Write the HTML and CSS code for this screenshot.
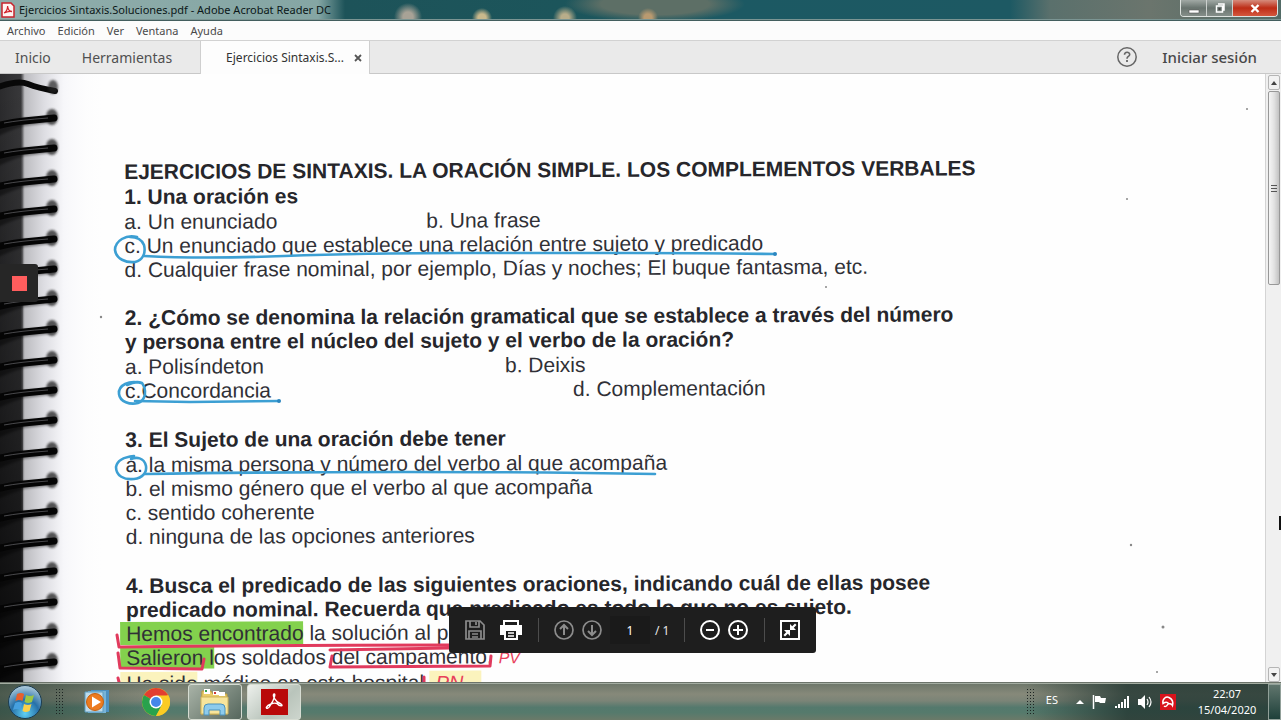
FILE: index.html
```html
<!DOCTYPE html>
<html lang="es">
<head>
<meta charset="utf-8">
<title>Ejercicios Sintaxis.Soluciones.pdf - Adobe Acrobat Reader DC</title>
<link rel="stylesheet" href="styles.css">
</head>
<body>
<header class="titlebar">
  <svg class="app-icon" width="14" height="16" viewBox="0 0 14 16"><path d="M1 1h9l3 3v11H1z" fill="#fff4f2" stroke="#c8232c" stroke-width="1.5"/><path d="M3 11c2-1 4-4 3.500-7C7 8 9 9.500 11 9.500 8 9 5 10 3 11z" fill="none" stroke="#d1222b" stroke-width="1.300"/></svg>
  <h1 class="window-title">Ejercicios Sintaxis.Soluciones.pdf - Adobe Acrobat Reader DC</h1>
  <div class="window-controls">
    <button class="wc" aria-label="Minimizar"><svg width="12" height="12"><path d="M1 8h10v3H1z" fill="#fff" stroke="#555" stroke-width=".6"/></svg></button>
    <button class="wc" aria-label="Restaurar"><svg width="12" height="12"><path d="M4 2h6v6H9M2.500 4h6v6h-6z" fill="none" stroke="#fff" stroke-width="1.500"/><path d="M4.500 6h2v2h-2z" fill="#444"/></svg></button>
    <button class="wc wc-close" aria-label="Cerrar"><svg width="12" height="12"><path d="M2.500 3l7 7M9.500 3l-7 7" stroke="#fff" stroke-width="2.400"/></svg></button>
  </div>
</header>
<nav class="menubar">
  <button>Archivo</button><button>Edición</button><button>Ver</button><button>Ventana</button><button>Ayuda</button>
</nav>
<nav class="tabs">
  <button class="tab">Inicio</button>
  <button class="tab">Herramientas</button>
  <div class="tab-active"><span>Ejercicios Sintaxis.S...</span><button class="tab-close" aria-label="Cerrar pestaña"><svg width="8" height="8"><path d="M1 1l6 6M7 1L1 7" stroke="#555" stroke-width="1.800"/></svg></button></div>
  <div class="account">
    <button aria-label="Ayuda"><svg width="22" height="22" viewBox="0 0 22 22" fill="none" stroke="#666"><circle cx="11" cy="11" r="9.200" stroke-width="1.500"/><path d="M8.500 8.800c0-3.300 5.200-3.300 5.200-.3 0 2-2.700 2-2.700 4.200" stroke-width="1.600"/><path d="M11 14v2" stroke-width="1.800"/></svg></button>
    <button class="signin">Iniciar sesión</button>
  </div>
</nav>

<main class="viewer">
  <svg class="binding" width="110" height="610" aria-hidden="true">
    <defs>
      <linearGradient id="edge"><stop offset="0" stop-color="#2c2c2e"/><stop offset=".19" stop-color="#39393b"/><stop offset=".225" stop-color="#bcbcc0"/><stop offset=".4" stop-color="#dddde2"/><stop offset=".58" stop-color="#f7f7fa"/><stop offset="1" stop-color="#fff" stop-opacity="0"/></linearGradient>
      <linearGradient id="dark" x2="0" y2="1"><stop offset="0" stop-color="#000" stop-opacity="0"/><stop offset=".5" stop-color="#000" stop-opacity=".35"/><stop offset="1" stop-color="#000" stop-opacity=".8"/></linearGradient>
      <filter id="soft" x="-20%" y="-50%" width="140%" height="200%"><feGaussianBlur stdDeviation="1.100"/></filter>
      <g id="ring">
        <path d="M-4 12Q8 3 24 1l27-2v7L24 9Q8 14-4 20z" fill="#000" opacity=".4" filter="url(#soft)"/>
        <ellipse cx="52" cy="0" rx="6" ry="8" fill="#222" opacity=".75" filter="url(#soft)"/>
        <path d="M-3 9Q12 5 24 4l30-3" fill="none" stroke="#050505" stroke-width="7" stroke-linecap="round"/>
        <path d="M4 6Q20 3 48 1" fill="none" stroke="#77777c" stroke-width="1" opacity=".6"/>
      </g>
    </defs>
    <rect width="110" height="610" fill="url(#edge)"/>
    <rect width="23" height="610" fill="url(#dark)"/>
    <path d="M-2 13Q18 6 28 10t27 7" fill="none" stroke="#080808" stroke-width="6" stroke-linecap="round"/>
    <ellipse cx="53" cy="13" rx="5" ry="7" fill="#222" opacity=".7" filter="url(#soft)"/>
    <use href="#ring" y="43"/><use href="#ring" y="73"/><use href="#ring" y="104"/><use href="#ring" y="134"/><use href="#ring" y="164"/><use href="#ring" y="194"/><use href="#ring" y="224"/><use href="#ring" y="254"/><use href="#ring" y="285"/><use href="#ring" y="315"/><use href="#ring" y="345"/><use href="#ring" y="376"/><use href="#ring" y="406"/><use href="#ring" y="436"/><use href="#ring" y="466"/><use href="#ring" y="496"/><use href="#ring" y="527"/><use href="#ring" y="557"/><use href="#ring" y="587"/>
  </svg>

  <article class="sheet">
    <section>
      <h2>EJERCICIOS DE SINTAXIS. LA ORACIÓN SIMPLE. LOS COMPLEMENTOS VERBALES</h2>
      <h3>1. Una oración es</h3>
      <div class="options cols-near"><p>a. Un enunciado</p><p>b. Una frase</p></div>
      <p>c. Un enunciado que establece una relación entre sujeto y predicado</p>
      <p>d. Cualquier frase nominal, por ejemplo, Días y noches; El buque fantasma, etc.</p>
    </section>
    <section>
      <h3>2. ¿Cómo se denomina la relación gramatical que se establece a través del número<br>y persona entre el núcleo del sujeto y el verbo de la oración?</h3>
      <div class="options cols-mid"><p>a. Polisíndeton</p><p>b. Deixis</p></div>
      <div class="options cols-far"><p>c.Concordancia</p><p>d. Complementación</p></div>
    </section>
    <section>
      <h3>3. El Sujeto de una oración debe tener</h3>
      <p>a. la misma persona y número del verbo al que acompaña</p>
      <p>b. el mismo género que el verbo al que acompaña</p>
      <p>c. sentido coherente</p>
      <p>d. ninguna de las opciones anteriores</p>
    </section>
    <section>
      <h3>4. Busca el predicado de las siguientes oraciones, indicando cuál de ellas posee<br>predicado nominal. Recuerda que predicado es todo lo que no es sujeto.</h3>
      <p><mark>Hemos encontrado</mark> la solución al problema.</p>
      <p><mark>Salieron l</mark>os soldados del campamento. <i class="note">PV</i></p>
      <p><mark class="pale">Ha sido</mark> médico en este hospital. <mark class="pale answer"><i class="note note-big">PN</i></mark></p>
    </section>
  </article>

  <svg class="ink" width="100%" height="100%" aria-hidden="true">
    <g transform="translate(0 -74)" fill="none" stroke-linecap="round" stroke-linejoin="round">
      <g stroke="#3c9fd3" stroke-width="2.600">
        <path d="M137 237c-11-3-22 4-22 13 1 9 11 13 20 12 8-2 11-9 9-17-2-5-6-8-14-8"/>
        <path d="M144 256q60 3 140 0t175-3 170 0 146 1"/>
        <path d="M141 383c-12-3-23 2-22 11 1 8 11 11 19 9 8-3 9-13 4-20-5-2-11 0-15 2"/>
        <path d="M135 401l55 1 89-1"/>
        <path d="M134 456c-10 1-17 5-18 11 0 9 8 13 18 12 9-1 13-7 12-13-2-9-10-9-15-7"/>
        <path d="M145 474q120-2 260-2t250 2"/>
      </g>
      <g stroke="#e13a5d" stroke-width="3">
        <path d="M117 635l2 12q160-2 330-2M330 650l120-2"/>
        <path d="M118 653l2 15 82 1 2-10M332 656l-2 11 160-1 1-10M118 678l2 8M424 677v9"/>
      </g>
      <g fill="#888" stroke="none"><circle cx="101" cy="317" r="1.200"/><circle cx="775" cy="254" r="2" fill="#2b86c0"/><circle cx="279" cy="401" r="2" fill="#2b86c0"/><circle cx="1247" cy="109" r="1"/><circle cx="1131" cy="545" r="1.200"/><circle cx="826" cy="287" r="1"/><circle cx="1163" cy="627" r="1.500"/><circle cx="1157" cy="672" r="1"/><circle cx="1127" cy="199" r="1"/></g>
    </g>
  </svg>

  <button class="record" aria-label="Detener grabación"><span></span></button>

  <div class="floatbar">
    <button aria-label="Guardar"><svg width="20" height="20" fill="none" stroke="#8c8c8c" stroke-width="1.700"><path d="M1 1h14l4 4v14H1z"/><path d="M5 1v6h9V1M11 2v3M4 19v-8h12v8M7 14h6M7 17h6"/></svg></button>
    <button aria-label="Imprimir"><svg width="22" height="20"><path d="M4 6V1h14v5M4 14H1V6h20v8h-3" fill="none" stroke="#fff" stroke-width="2"/><path d="M1 7h20v6H1z" fill="#fff"/><path d="M5 10h12v9H5z" fill="#1e1e1e" stroke="#fff" stroke-width="2"/><path d="M8 13h6M8 16h6" stroke="#fff" stroke-width="1.400"/></svg></button>
    <hr>
    <button aria-label="Página anterior"><svg width="20" height="20" fill="none" stroke="#8c8c8c" stroke-width="1.700"><circle cx="10" cy="10" r="9"/><path d="M10 15V5M6 9l4-4 4 4" stroke-width="2"/></svg></button>
    <button aria-label="Página siguiente"><svg width="20" height="20" fill="none" stroke="#8c8c8c" stroke-width="1.700"><circle cx="10" cy="10" r="9"/><path d="M10 5v10M6 11l4 4 4-4" stroke-width="2"/></svg></button>
    <input class="page-no" aria-label="Página" value="1"><span class="page-total">/ 1</span>
    <hr>
    <button aria-label="Alejar"><svg width="20" height="20" fill="none" stroke="#fff" stroke-width="2"><circle cx="10" cy="10" r="9"/><path d="M6 10h8"/></svg></button>
    <button aria-label="Acercar"><svg width="20" height="20" fill="none" stroke="#fff" stroke-width="2"><circle cx="10" cy="10" r="9"/><path d="M5 10h10M10 5v10"/></svg></button>
    <hr>
    <button aria-label="Salir de pantalla completa"><svg width="20" height="20"><path d="M1 1h18v18H1z" fill="none" stroke="#fff" stroke-width="2"/><path d="M10 10V4l2.200 2.200L15 3.500 16.500 5l-2.700 2.800L16 10zM10 10v6l-2.200-2.200L5 16.500 3.500 15l2.700-2.800L4 10z" fill="#fff"/></svg></button>
  </div>

  <div class="scrollbar" aria-hidden="true">
    <span class="sb-btn"><svg width="6" height="4"><path d="M0 4l3-4 3 4z" fill="#444"/></svg></span>
    <span class="sb-thumb"><i></i><i></i><i></i></span>
    <span class="sb-space"></span>
    <span class="sb-btn"><svg width="6" height="4"><path d="M0 0l3 4 3-4z" fill="#444"/></svg></span>
  </div>
  <span class="pointer"></span>
</main>

<footer class="taskbar">
  <button class="start" aria-label="Inicio"><svg width="36" height="36" viewBox="0 0 36 36">
    <defs><radialGradient id="orb" cx=".5" cy=".85" r=".85"><stop offset="0" stop-color="#5fd0f4"/><stop offset=".5" stop-color="#2670a8"/><stop offset="1" stop-color="#b4cedd"/></radialGradient></defs>
    <circle cx="18" cy="18" r="16.500" fill="url(#orb)" stroke="#1b3c50"/><path d="M10 10q4-2 7 0l-1.500 7q-4-2-7 0z" fill="#e8602c"/><path d="M19 11q4 2 8 0l-2 7q-4 2-7.500 0z" fill="#9cc744"/><path d="M8 19q4-2 7 0l-1.500 7q-4-2-7.500 0z" fill="#46a0df"/><path d="M17 20q4 2 7.500 0l-2 7q-4 2-7 0z" fill="#fad04a"/></svg></button>
  <span class="grip"></span>
  <button class="task" aria-label="Windows Media Player"><svg width="26" height="26"><path d="M7 1h18v22H7z" fill="#4c90c0"/><path d="M4 2h18v22H4z" fill="#78b4d8"/><path d="M1 3h18v20H1z" fill="#bfdbea" stroke="#5d9dc1"/><circle cx="11" cy="13" r="8.500" fill="#ec7b20" stroke="#c5600e"/><path d="M8 7.500l9 5.500-9 5.500z" fill="#fff"/></svg></button>
  <button class="task" aria-label="Google Chrome"><svg width="28" height="28" viewBox="0 0 28 28"><circle cx="14" cy="14" r="14" fill="#f9c71c"/><path d="M14 14L1.900 7A14 14 0 0 1 26.100 7z" fill="#e23e31"/><path d="M14 14L1.900 7A14 14 0 0 0 14 28l6-10.500z" fill="#29a24d"/><path d="M14 7.500H26.400A14 14 0 0 1 14 28l5.600-10.700z" fill="#fbcb24"/><circle cx="14" cy="14" r="6.500" fill="#fff"/><circle cx="14" cy="14" r="5" fill="#4587ea"/></svg></button>
  <button class="task open" aria-label="Explorador de archivos"><svg width="32" height="28"><path d="M3 3h9l2 3h14v20H2z" fill="#eacb69" stroke="#b99b42"/><path d="M5 1h6v5H5zM14 3h6v4h-6zM20 4h6v4h-6z" fill="#fff"/><path d="M6 2h2v2H6z" fill="#33a14c"/><path d="M15 4h2v2h-2z" fill="#d03933"/><path d="M2 9h27v17H2z" fill="#f7e59c" stroke="#cdb35b"/><path d="M5 27v-7q0-4 4-4h13q4 0 4 4v7h-5v-5H10v5z" fill="#8dcbec" stroke="#4a92bd"/></svg></button>
  <button class="task open active" aria-label="Adobe Acrobat Reader DC"><svg width="27" height="26"><path d="M0 0h27v26H0z" fill="#b90909"/><path d="M7 19c-3 1-2-2 3-4 3-4 5-11 3-10s1 8 7 10c3 2-1 3-4-.5-3-1-5 0-6 .5-1 2-2 4-3 4z" fill="none" stroke="#fff" stroke-width="1.400"/></svg></button>
  <div class="tray">
    <span class="grip"></span>
    <span class="lang">ES</span>
    <svg width="8" height="5"><path d="M0 5l4-4 4 4z" fill="#fff"/></svg>
    <svg width="15" height="14"><path d="M1.500 0v14" stroke="#fff" stroke-width="1.500"/><path d="M3 1h5l1 2h5l-1 5H8L7 7H3z" fill="#fff"/></svg>
    <svg width="15" height="12" fill="#fff"><path d="M0 10h2v2H0zM3 8h2v4H3zM6 6h2v6H6zM9 3h2v9H9zM12 0h2v12h-2z"/></svg>
    <svg width="14" height="14"><path d="M0 4h3l4-4v14l-4-4H0z" fill="#fff"/><path d="M9 4q2 3 0 6M11 2q4 5 0 10" fill="none" stroke="#fff" stroke-width="1.200"/></svg>
    <svg width="16" height="16"><path d="M0 0h16v16H0z" fill="#d8131c"/><path d="M3 9.500C2 5 6 2 9 3.500c3 1.500 4.500 4 3.500 8-1-2-2.500-2-4-2-1-1.500-3-1.500-5.500 0z" fill="none" stroke="#fff" stroke-width="1.500"/><path d="M8.500 9.500l-2 2.500q-1.500 1-2.500 0" fill="none" stroke="#fff" stroke-width="1.300"/></svg>
    <time class="clock"><span>22:07</span><span>15/04/2020</span></time>
    <button class="show-desktop" aria-label="Mostrar escritorio"></button>
  </div>
</footer>
</body>
</html>
```
FILE: styles.css
```css
* { box-sizing: border-box; }
body {
  margin: 0;
  height: 100vh;
  display: flex;
  flex-direction: column;
  overflow: hidden;
  font-family: "Noto Sans", sans-serif;
  background: #fff;
}
button { border: 0; padding: 0; background: none; color: inherit; font: inherit; display: flex; align-items: center; justify-content: center; }
h1, h2, h3, p { margin: 0; }

.titlebar {
  flex: none;
  height: 21px;
  display: flex;
  align-items: center;
  padding-left: 1px;
  gap: 4px;
  border-bottom: 1px solid #435e5e;
  box-shadow: inset 0 -1px #7b9593;
  background:
    radial-gradient(circle at 482px 18px, #c9b98c 0 4px, transparent 10px),
    radial-gradient(circle at 565px 18px, #b8ad8a 0 4px, transparent 12px),
    radial-gradient(circle at 648px 18px, #b99a70 0 4px, transparent 10px),
    radial-gradient(circle at 408px 17px, #a8a296 0 5px, transparent 14px),
    radial-gradient(ellipse 90px 18px at 655px 4px, #5d6f66 0 60%, transparent),
    linear-gradient(90deg, #8fadab 0, #85a6a4 318px, #1d5359 345px, #1c555b 560px, #1c5963 720px, #1d5963 1010px, #5a706c 1050px, #6b756d 1150px, #526b66 100%);
}
.window-title { font-size: 11px; font-weight: 400; line-height: 20px; color: #0b1718; white-space: nowrap; }
.window-controls { margin-left: auto; margin-right: 3px; align-self: flex-start; display: flex; height: 17px; border: 1px solid #dde2df; border-top: 0; border-radius: 0 0 4px 4px; overflow: hidden; }
.wc { width: 26px; border-right: 1px solid #cbd0cd; background: linear-gradient(#a1a9a5, #68736e 50%, #858e89); }
.wc-close { width: 44px; border: 0; background: linear-gradient(#d68b7c, #bd2c16 50%, #d4573d); }

.menubar { flex: none; height: 19px; display: flex; align-items: center; gap: 12px; padding-left: 7px; background: #fcfcfc; font-size: 11px; color: #4a4a4a; }

.tabs { flex: none; height: 34px; display: flex; align-items: stretch; background: #eaeaea; border-top: 1px solid #d2d2d2; border-bottom: 1px solid #c8c8c8; color: #505050; }
.tab { font-size: 14px; margin-left: 15px; margin-right: 16px; }
.tab-active { display: flex; align-items: center; gap: 10px; margin-left: 12px; margin-bottom: -1px; padding: 0 7px 0 25px; background: #fdfdfd; border: 1px solid #cfcfcf; border-width: 0 1px; font-size: 12px; color: #333; }
.account { margin-left: auto; margin-right: 24px; display: flex; align-items: center; gap: 24px; }
.signin { font-size: 15px; font-weight: 500; color: #484848; }

.viewer { position: relative; flex: 1; min-height: 0; display: flex; overflow: hidden; background: #fefefe; }
.binding { position: absolute; left: 0; top: 0; }
.sheet {
  flex: 1;
  position: relative;
  padding: 86px 20px 0 125px;
  font: 21px/24px "Liberation Sans", sans-serif;
  color: #303036;
  white-space: nowrap;
  transform: rotate(-0.25deg);
  transform-origin: 125px 300px;
}
.sheet section { margin-bottom: 25px; }
.sheet h2, .sheet h3 { font-size: 21px; line-height: 24px; color: #26262b; }
.sheet h2, .sheet section:not(:last-child) h3 { margin-bottom: 1px; }
.sheet section:first-child { margin-bottom: 24px; }
.options { display: grid; }
.cols-near { grid-template-columns: 302px 1fr; }
.cols-mid { grid-template-columns: 380px 1fr; }
.cols-far { grid-template-columns: 448px 1fr; }
mark { margin-left: -6px; padding-left: 6px; background: #83d14d; color: inherit; }
mark.pale { background: #fbf3bd; }
mark.answer { padding-right: 18px; }
.note { color: #e8405a; font-size: 16px; }
.note-big { font-size: 20px; }
.ink { position: absolute; inset: 0; pointer-events: none; }

.record { position: absolute; left: 0; top: 190px; width: 38px; height: 38px; background: #262626; border-radius: 0 3px 3px 0; }
.record span { width: 15px; height: 15px; background: #ff5d5d; }

.floatbar {
  position: absolute;
  left: 449px;
  bottom: 29px;
  height: 46px;
  padding: 0 16px;
  display: flex;
  align-items: center;
  background: #1e1e1e;
  border-radius: 3px;
  color: #e8e8e8;
  font-size: 12px;
}
.floatbar button { width: 20px; margin-right: 8px; }
.floatbar button:nth-of-type(2) { width: 22px; margin-left: 7px; }
.floatbar button:last-child { margin-right: 0; }
.floatbar hr { width: 1px; height: 24px; border: 0; margin: 0 15px 0 8px; background: #4c4c4c; }
.floatbar .page-total + hr { margin-left: 15px; }
.page-no { width: 40px; height: 28px; border: 0; padding: 0; background: #1a1a1a; color: #fff; font: inherit; text-align: center; }
.page-total { padding-left: 5px; }

.scrollbar { position: relative; flex: none; width: 16px; padding: 1px 1px 0 2px; display: flex; flex-direction: column; background: #f0f0f0; border-left: 1px solid #d4d4d4; }
.sb-btn { height: 15px; display: flex; align-items: center; justify-content: center; border: 1px solid #b5b5b5; background: #f2f2f2; border-radius: 2px; }
.sb-thumb { flex: 0 0 32%; margin-top: 1px; display: flex; flex-direction: column; align-items: center; justify-content: center; gap: 2px; border: 1px solid #989898; border-radius: 2px; background: linear-gradient(90deg, #f5f5f5, #e2e2e2 50%, #c2c2c2); }
.sb-thumb i { width: 6px; height: 1px; background: #555; }
.sb-space { flex: 1; }
.pointer { position: absolute; right: 0; top: 442px; width: 2px; height: 14px; background: #111; }

.taskbar {
  flex: none;
  height: 38px;
  display: flex;
  align-items: center;
  padding-left: 7px;
  border-top: 1px solid #6c746b;
  box-shadow: inset 0 1px #a4ada2;
  background:
    linear-gradient(90deg, rgba(45,65,55,.65), transparent 12%, transparent 80%, rgba(35,55,50,.8) 88%),
    linear-gradient(#6c7669, #86897a 30%, #7b8477 48%, #54796d 66%, #557a6c 80%, #6b7a69);
}
.grip { width: 8px; height: 28px; background: radial-gradient(circle, #1c2422 1px, transparent 1px) 0 0 / 3px 3px; }
.start { margin-right: 12px; }
.task { width: 54px; height: 36px; }
.start + .grip { margin-right: 7px; }
.task + .task { margin-left: 5px; }
.open { border: 1px solid #d6dcd2; border-radius: 3px; background: linear-gradient(135deg, #a9b3a7, #56675d); }
.active { background: linear-gradient(135deg, #edf0ec, #b9c4bb 60%, #cdd5cd); }
.tray { margin-left: auto; height: 100%; display: flex; align-items: center; gap: 8px; color: #fff; font-size: 11px; }
.lang { margin: 0 10px 5px 4px; }
.tray .clock { width: 66px; margin-left: 10px; display: flex; flex-direction: column; text-align: center; line-height: 16px; }
.show-desktop { width: 13px; height: 36px; border: 1px solid #91a099; background: linear-gradient(#60756d, #1e403a); }
```
